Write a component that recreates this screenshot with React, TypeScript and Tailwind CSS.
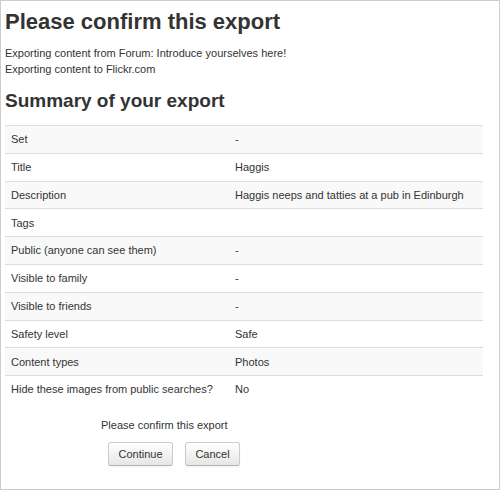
const rows: [string, string][] = [
  ["Set", "-"],
  ["Title", "Haggis"],
  ["Description", "Haggis neeps and tatties at a pub in Edinburgh"],
  ["Tags", ""],
  ["Public (anyone can see them)", "-"],
  ["Visible to family", "-"],
  ["Visible to friends", "-"],
  ["Safety level", "Safe"],
  ["Content types", "Photos"],
  ["Hide these images from public searches?", "No"],
];

export default function App() {
  return (
    <div className="h-[491px] w-[500px] bg-white">
      <div
        className="h-[490px] w-[500px] border border-[#cccccc] pl-[4px] pt-[8px] text-[#333333]"
        style={{ fontFamily: '"Liberation Sans", Arial, sans-serif' }}
      >
        <h1 className="text-[22px] font-bold leading-[26px]">Please confirm this export</h1>
        <div className="mt-[10px] text-[11px] leading-[16px]">
          <p>Exporting content from Forum: Introduce yourselves here!</p>
          <p>Exporting content to Flickr.com</p>
        </div>
        <h2 className="mt-[13px] text-[19px] font-bold leading-[22px]">Summary of your export</h2>

        <div className="mt-[13px] w-[478px] text-[11px]">
          {rows.map(([label, value], i) => (
            <div
              key={label}
              className={`flex h-[27.8px] items-center border-t border-[#dddddd] ${
                i % 2 === 0 ? "bg-[#f9f9f9]" : "bg-white"
              }`}
            >
              <div className="w-[224px] pl-[6px]">{label}</div>
              <div className="flex-1 pl-[6px]">{value}</div>
            </div>
          ))}
        </div>

        <p className="ml-[96px] mt-[14px] text-[11px] leading-[16px]">Please confirm this export</p>
        <div className="ml-[103px] mt-[9px] flex gap-[12px] text-[11px]">
          <button className="flex h-[24px] w-[65px] items-center justify-center rounded-[3px] border border-[#cccccc] border-b-[#b3b3b3] bg-gradient-to-b from-white to-[#e6e6e6] text-[#333333] shadow-[0_1px_2px_rgba(0,0,0,0.05)]">
            Continue
          </button>
          <button className="flex h-[24px] w-[55px] items-center justify-center rounded-[3px] border border-[#cccccc] border-b-[#b3b3b3] bg-gradient-to-b from-white to-[#e6e6e6] text-[#333333] shadow-[0_1px_2px_rgba(0,0,0,0.05)]">
            Cancel
          </button>
        </div>
      </div>
    </div>
  );
}
